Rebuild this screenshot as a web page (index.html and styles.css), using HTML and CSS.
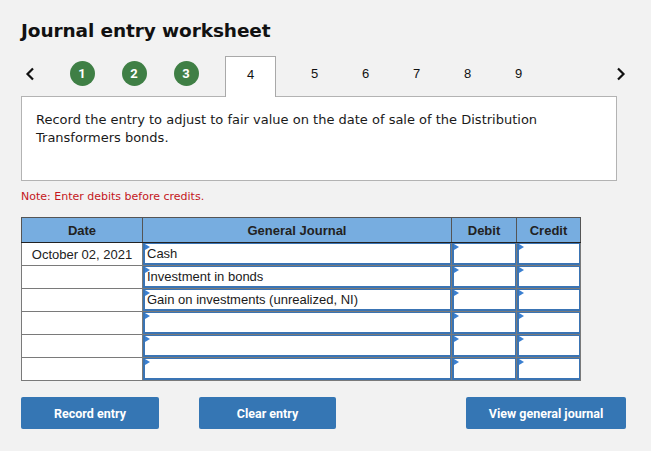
FILE: index.html
```html
<!DOCTYPE html>
<html>
<head>
<meta charset="utf-8">
<link rel="stylesheet" href="styles.css">
</head>
<body>
<div class="page">
  <h1 class="title">Journal entry worksheet</h1>
  <div class="nav">
    <div class="arrow prev"><svg width="10" height="14" viewBox="0 0 10 14"><polyline points="8,1.5 2.5,7 8,12.5" fill="none" stroke="#111" stroke-width="2.2"/></svg></div>
    <div class="step done"><span class="dot">1</span></div>
    <div class="step done"><span class="dot">2</span></div>
    <div class="step done"><span class="dot">3</span></div>
    <div class="step active">4</div>
    <div class="step">5</div>
    <div class="step">6</div>
    <div class="step">7</div>
    <div class="step">8</div>
    <div class="step">9</div>
    <div class="spacer"></div>
    <div class="arrow next"><svg width="10" height="14" viewBox="0 0 10 14"><polyline points="2,1.5 7.5,7 2,12.5" fill="none" stroke="#111" stroke-width="2.2"/></svg></div>
  </div>
  <div class="panel">
    <p class="prompt">Record the entry to adjust to fair value on the date of sale of the Distribution Transformers bonds.</p>
  </div>
  <p class="note">Note: Enter debits before credits.</p>
  <table class="journal">
    <colgroup><col class="c-date"><col class="c-acct"><col class="c-amt"><col class="c-amt2"></colgroup>
    <thead>
      <tr><th>Date</th><th>General Journal</th><th>Debit</th><th>Credit</th></tr>
    </thead>
    <tbody>
      <tr><td class="date">October 02, 2021</td><td class="inp"><div class="box">Cash</div></td><td class="inp"><div class="box"></div></td><td class="inp"><div class="box"></div></td></tr>
      <tr><td class="date"></td><td class="inp"><div class="box">Investment in bonds</div></td><td class="inp"><div class="box"></div></td><td class="inp"><div class="box"></div></td></tr>
      <tr><td class="date"></td><td class="inp"><div class="box">Gain on investments (unrealized, NI)</div></td><td class="inp"><div class="box"></div></td><td class="inp"><div class="box"></div></td></tr>
      <tr><td class="date"></td><td class="inp"><div class="box"></div></td><td class="inp"><div class="box"></div></td><td class="inp"><div class="box"></div></td></tr>
      <tr><td class="date"></td><td class="inp"><div class="box"></div></td><td class="inp"><div class="box"></div></td><td class="inp"><div class="box"></div></td></tr>
      <tr><td class="date"></td><td class="inp"><div class="box"></div></td><td class="inp"><div class="box"></div></td><td class="inp"><div class="box"></div></td></tr>
    </tbody>
  </table>
  <div class="actions">
    <button class="btn">Record entry</button>
    <button class="btn clear">Clear entry</button>
    <div class="spacer"></div>
    <button class="btn view">View general journal</button>
  </div>
</div>
</body>
</html>
```
FILE: styles.css
```css
html, body { margin: 0; padding: 0; background: #f2f2f2; }
.page { padding: 0 21px 0 21px; width: 609px; font-family: "DejaVu Sans", Verdana, sans-serif; color: #111; }
.title { margin: 0; padding-top: 20px; font-size: 18.5px; line-height: 22px; font-weight: bold; height: 22px; letter-spacing: -0.1px; }
.nav { display: flex; margin-top: 14px; height: 41px; margin-bottom: -1px; align-items: stretch; }
.arrow { display: flex; align-items: center; justify-content: center; }
.prev { width: 35px; justify-content: flex-start; padding-left: 4px; box-sizing: border-box; padding-bottom: 6px; }
.next { width: 14px; justify-content: flex-start; padding-bottom: 6px; }
.spacer { flex: 1; }
.step { width: 51px; display: flex; align-items: center; justify-content: center; font-family: "Liberation Sans", Arial, sans-serif; font-size: 13px; padding-bottom: 6px; box-sizing: border-box; }
.step.done { width: 52px; }
.dot { width: 25px; height: 25px; border-radius: 50%; background: #3f7f45; color: #fff; font-weight: bold; font-size: 13px; display: flex; align-items: center; justify-content: center; font-family: "Roboto", "Liberation Sans", sans-serif; }
.step.active { margin: 0 13px; background: #fff; border: 1px solid #a9a9a9; border-bottom: none; position: relative; z-index: 1; padding-bottom: 5px; }
.panel { background: #fff; border: 1px solid #b3b3b3; height: 83px; box-sizing: content-box; width: 594px; }
.prompt { margin: 0; padding: 14px 14px 0 14px; font-size: 13px; line-height: 18px; color: #1a1a1a; }
.note { margin: 9px 0 0 0; font-size: 11px; line-height: 14px; color: #c4161c; }
.journal { margin-top: 13px; border-collapse: collapse; table-layout: fixed; width: 559px; font-family: "Liberation Sans", Arial, sans-serif; font-size: 13px; }
.c-date { width: 121px; } .c-acct { width: 309px; } .c-amt { width: 65px; } .c-amt2 { width: 64px; }
.journal th { background: #77ade0; height: 24px; padding: 0; font-weight: bold; color: #222; border: 1px solid #555; border-bottom: 1px solid #222; font-size: 13px; }
.journal td { height: 22px; padding: 0; border: 1px solid #7a7a7a; background: #fff; }
.journal td.date { text-align: center; color: #222; }
.journal td.inp { background: #fff; }
.box { position: relative; height: 22px; box-sizing: border-box; border: 1px solid #3a74b4; border-left-width: 2px; border-bottom-width: 2px; padding-left: 2px; line-height: 19px; color: #1a1a1a; white-space: nowrap; overflow: hidden; }
.box::before { content: ""; position: absolute; left: 0; top: 0; border-left: 5px solid #3a7fd0; border-top: 3px solid transparent; border-bottom: 3px solid transparent; }
.actions { display: flex; margin-top: 16px; width: 605px; }
.btn { height: 32px; border: none; border-radius: 2px; background: #3576b4; color: #fff; font-family: "Roboto", "Liberation Sans", sans-serif; font-weight: bold; font-size: 12.5px; padding: 0; width: 138px; }
.btn.clear { margin-left: 40px; width: 137px; }
.btn.view { width: 160px; }
```
